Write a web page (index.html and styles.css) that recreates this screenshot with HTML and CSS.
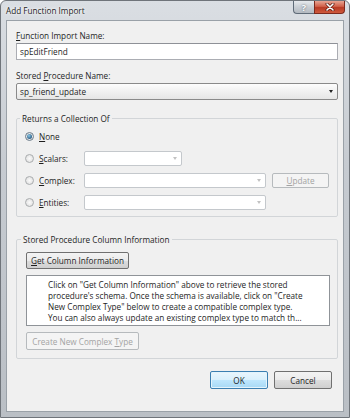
FILE: index.html
```html
<!DOCTYPE html>
<html lang="en">

<head>
    <meta charset="UTF-8">
    <title>Add Function Import</title>
    <link rel="stylesheet" href="styles.css">
</head>

<body>
    <div class="window">
        <div class="titlebar">
            <span class="title">Add Function Import</span>
            <div class="caption-btns">
                <span class="cap-btn help">?</span>
                <span class="cap-btn close">
                    <svg width="10" height="8" viewBox="0 0 10 8">
                        <path d="M2 1 L8 7 M8 1 L2 7" stroke="#5a1a10" stroke-width="3" stroke-linecap="round"/>
                        <path d="M2 1 L8 7 M8 1 L2 7" stroke="#fff" stroke-width="1.6" stroke-linecap="round"/>
                    </svg>
                </span>
            </div>
        </div>

        <div class="client">
            <div class="field-label"><u>F</u>unction Import Name:</div>
            <div class="textbox">spEditFriend</div>

            <div class="field-label second"><span>Stored <u>P</u>rocedure Name:</span></div>
            <div class="dropdown">
                <span>sp_friend_update</span>
                <span class="arrow dark"></span>
            </div>

            <fieldset class="group returns">
                <legend>Returns a Collection Of</legend>
                <div class="option-row">
                    <span class="radio checked"></span>
                    <span class="option-label"><u>N</u>one</span>
                </div>
                <div class="option-row">
                    <span class="radio"></span>
                    <span class="option-label"><u>S</u>calars:</span>
                    <div class="combo small"><span class="arrow"></span></div>
                </div>
                <div class="option-row">
                    <span class="radio"></span>
                    <span class="option-label"><u>C</u>omplex:</span>
                    <div class="combo"><span class="arrow"></span></div>
                    <button class="btn disabled update"><u>U</u>pdate</button>
                </div>
                <div class="option-row">
                    <span class="radio"></span>
                    <span class="option-label"><u>E</u>ntities:</span>
                    <div class="combo"><span class="arrow"></span></div>
                </div>
            </fieldset>

            <fieldset class="group columns">
                <legend>Stored Procedure Column Information</legend>
                <button class="btn get-info"><u>G</u>et Column Information</button>
                <div class="info-box">
                    Click on "Get Column Information" above to retrieve the stored<br>
                    procedure's schema. Once the schema is available, click on "Create<br>
                    New Complex Type" below to create a compatible complex type.<br>
                    You can also always update an existing complex type to match th...
                </div>
                <button class="btn disabled create">Create New Complex <u>T</u>ype</button>
            </fieldset>

            <div class="dialog-buttons">
                <button class="btn default">OK</button>
                <button class="btn">Cancel</button>
            </div>
        </div>
    </div>
</body>

</html>
```

FILE: styles.css
```css
body {
    margin: 0;
    font-family: "Open Sans", sans-serif;
    font-size: 8.2px;
    line-height: 11px;
    color: #1e1e1e;
}

u {
    text-underline-offset: 1px;
}

.window {
    width: 350px;
    height: 418px;
    box-sizing: border-box;
    padding: 0 5px 5px;
    border: 1px solid #6f747a;
    border-radius: 6px 6px 0 0;
    background: linear-gradient(#dadee3, #c6cbd1 40%, #babfc5);
}

.titlebar {
    height: 19px;
    display: flex;
    justify-content: space-between;
    align-items: flex-start;
}

.title {
    margin-top: 4px;
    color: #222;
    text-shadow: 0 0 4px #fff, 0 0 2px #fff;
}

.caption-btns {
    display: flex;
    margin-right: -1px;
}

.cap-btn {
    height: 13px;
    display: flex;
    align-items: center;
    justify-content: center;
    border: 1px solid #5f6b78;
    border-top: none;
    box-sizing: border-box;
}

.help {
    width: 21px;
    border-radius: 0 0 0 4px;
    border-right: none;
    background: linear-gradient(#e6e9ed, #c9ced4 50%, #b4bac1);
    color: #fff;
    font-weight: bold;
    font-size: 9px;
    text-shadow: 0 0 2px #4b5560;
}

.close {
    width: 31px;
    border-radius: 0 0 4px 0;
    border-color: #7d2a1e;
    background: linear-gradient(#e8a493, #d1614a 45%, #b83a24 55%, #cf5a3d);
}

.client {
    height: 392px;
    box-sizing: border-box;
    padding: 9px 5px 0 9px;
    background: #f0f0f0;
    border: 1px solid #9aa1a8;
}

.field-label {
    height: 11px;
}

.field-label.second {
    margin-top: 10px;
}

.textbox,
.dropdown {
    height: 17px;
    margin-top: 2px;
    box-sizing: border-box;
    padding-left: 3px;
    display: flex;
    align-items: center;
    justify-content: space-between;
}

.textbox {
    background: #fff;
    border: 1px solid #abadb3;
    border-top-color: #8e9197;
}

.dropdown {
    background: linear-gradient(#fdfdfd, #f1f1f1 50%, #e6e6e6);
    border: 1px solid #8a8a8a;
    border-radius: 2px;
}

.arrow {
    width: 0;
    height: 0;
    margin-right: 4px;
    border-left: 2.5px solid transparent;
    border-right: 2.5px solid transparent;
    border-top: 3px solid #c2c2c2;
}

.arrow.dark {
    border-top-color: #222;
}

.group {
    margin: 0;
    border: 1px solid #d2d5d8;
    border-radius: 2px;
}

.group legend {
    padding: 0 2px;
    margin-left: -5px;
}

.returns {
    margin-top: 13px;
    padding: 5px 6px 6px 8px;
}

.option-row {
    height: 15px;
    display: flex;
    align-items: center;
}

.option-row + .option-row {
    margin-top: 7px;
}

.radio {
    width: 9px;
    height: 9px;
    box-sizing: border-box;
    border-radius: 50%;
    border: 1px solid #a9acae;
    background: radial-gradient(#fafafa, #dcdcdc);
    display: flex;
    align-items: center;
    justify-content: center;
}

.radio.checked {
    border-color: #6c7c8a;
}

.radio.checked::after {
    content: "";
    width: 5px;
    height: 5px;
    border-radius: 50%;
    background: radial-gradient(circle at 40% 35%, #8fc9e6, #3a6f96 60%, #23496a);
}

.option-label {
    width: 45px;
    margin-left: 5px;
}

.combo {
    width: 182px;
    height: 15px;
    box-sizing: border-box;
    background: #fff;
    border: 1px solid #c4c8cc;
    border-radius: 2px;
    display: flex;
    align-items: center;
    justify-content: flex-end;
}

.combo.small {
    width: 98px;
}

.btn {
    font: inherit;
    color: #1e1e1e;
    padding: 0;
    height: 17px;
    border: 1px solid #707070;
    border-radius: 2px;
    background: linear-gradient(#f3f3f3, #ebebeb 50%, #dddddd 51%, #cfcfcf);
}

.btn.disabled {
    color: #a3a3a3;
    border-color: #b6babd;
    background: #f4f4f4;
}

.update {
    width: 57px;
    height: 15px;
    margin-left: 6px;
}

.columns {
    margin-top: 17px;
    padding: 7px 7px 8px 9px;
}

.get-info {
    width: 103px;
    display: block;
}

.info-box {
    height: 51px;
    margin-top: 6px;
    box-sizing: border-box;
    padding: 3px 0 0 21px;
    background: #fff;
    border: 1px solid #8f9398;
    white-space: nowrap;
    overflow: hidden;
}

.create {
    width: 113px;
    height: 18px;
    margin-top: 6px;
    display: block;
}

.dialog-buttons {
    margin: 12px 6px 0 0;
    display: flex;
    justify-content: flex-end;
    gap: 6px;
}

.dialog-buttons .btn {
    width: 58px;
    height: 18px;
}

.btn.default {
    border-color: #3c7fb1;
    background: linear-gradient(#eaf6fd, #d9f0fc 50%, #bee6fd 51%, #a7d9f5);
    box-shadow: inset 0 0 0 1px #e4f4fc;
}
```
